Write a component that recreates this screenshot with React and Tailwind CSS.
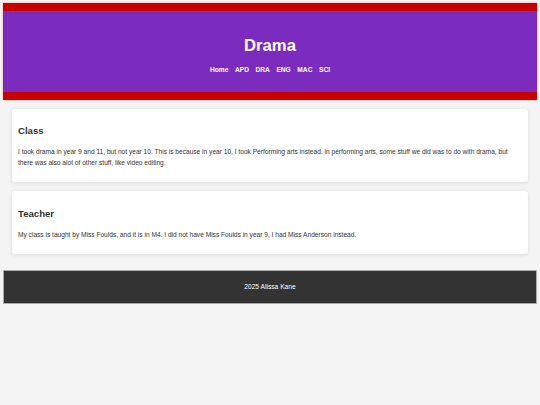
export default function App() {
  const nav = ["Home", "APD", "DRA", "ENG", "MAC", "SCI"];
  return (
    <div className="min-h-[405px] bg-[#f4f4f4] pt-[3px] px-[3px] pb-[3px] text-[#333]" style={{ fontFamily: '"Liberation Sans", Arial, sans-serif' }}>
      <header className="border-y-[8.3px] border-[#c80000] bg-[#7b2cbf] text-center text-white shadow-[0_0_1.5px_rgba(220,60,60,0.7)] pt-[25px] pb-[16.5px]">
        <h1 className="text-[16.7px] leading-[20px] font-bold">Drama</h1>
        <nav className="mt-[9px] flex justify-center gap-[6.5px] text-[6.67px] leading-[10px] font-bold">
          {nav.map((n) => (
            <a key={n} href="#" className="text-white">{n}</a>
          ))}
        </nav>
      </header>
      <main className="px-[9px] pt-[9px] flex flex-col gap-[9.3px]">
        <section className="bg-white rounded-[3.3px] shadow-[0_1px_4px_rgba(0,0,0,0.1)] px-[6px] pt-[16.7px] pb-[13.5px]">
          <h2 className="text-[9.6px] leading-[12px] font-bold">Class</h2>
          <p className="mt-[9.9px] text-[6.6px] leading-[10.67px]">
            I took drama in year 9 and 11, but not year 10. This is because in year 10, I took Performing arts instead. in performing arts, some stuff we did was to do with drama, but there was also alot of other stuff, like video editing.
          </p>
        </section>
        <section className="bg-white rounded-[3.3px] shadow-[0_1px_4px_rgba(0,0,0,0.1)] px-[6px] pt-[16.7px] pb-[13.5px]">
          <h2 className="text-[9.6px] leading-[12px] font-bold">Teacher</h2>
          <p className="mt-[9.9px] text-[6.6px] leading-[10.67px]">
            My class is taught by Miss Foulds, and it is in M4. I did not have Miss Foulds in year 9, I had Miss Anderson instead.
          </p>
        </section>
      </main>
      <footer className="mt-[16.5px] h-[33.3px] bg-[#333] border border-[#aaa] flex items-center justify-center text-white text-[6.67px]">
        2025 Alissa Kane
      </footer>
    </div>
  );
}
